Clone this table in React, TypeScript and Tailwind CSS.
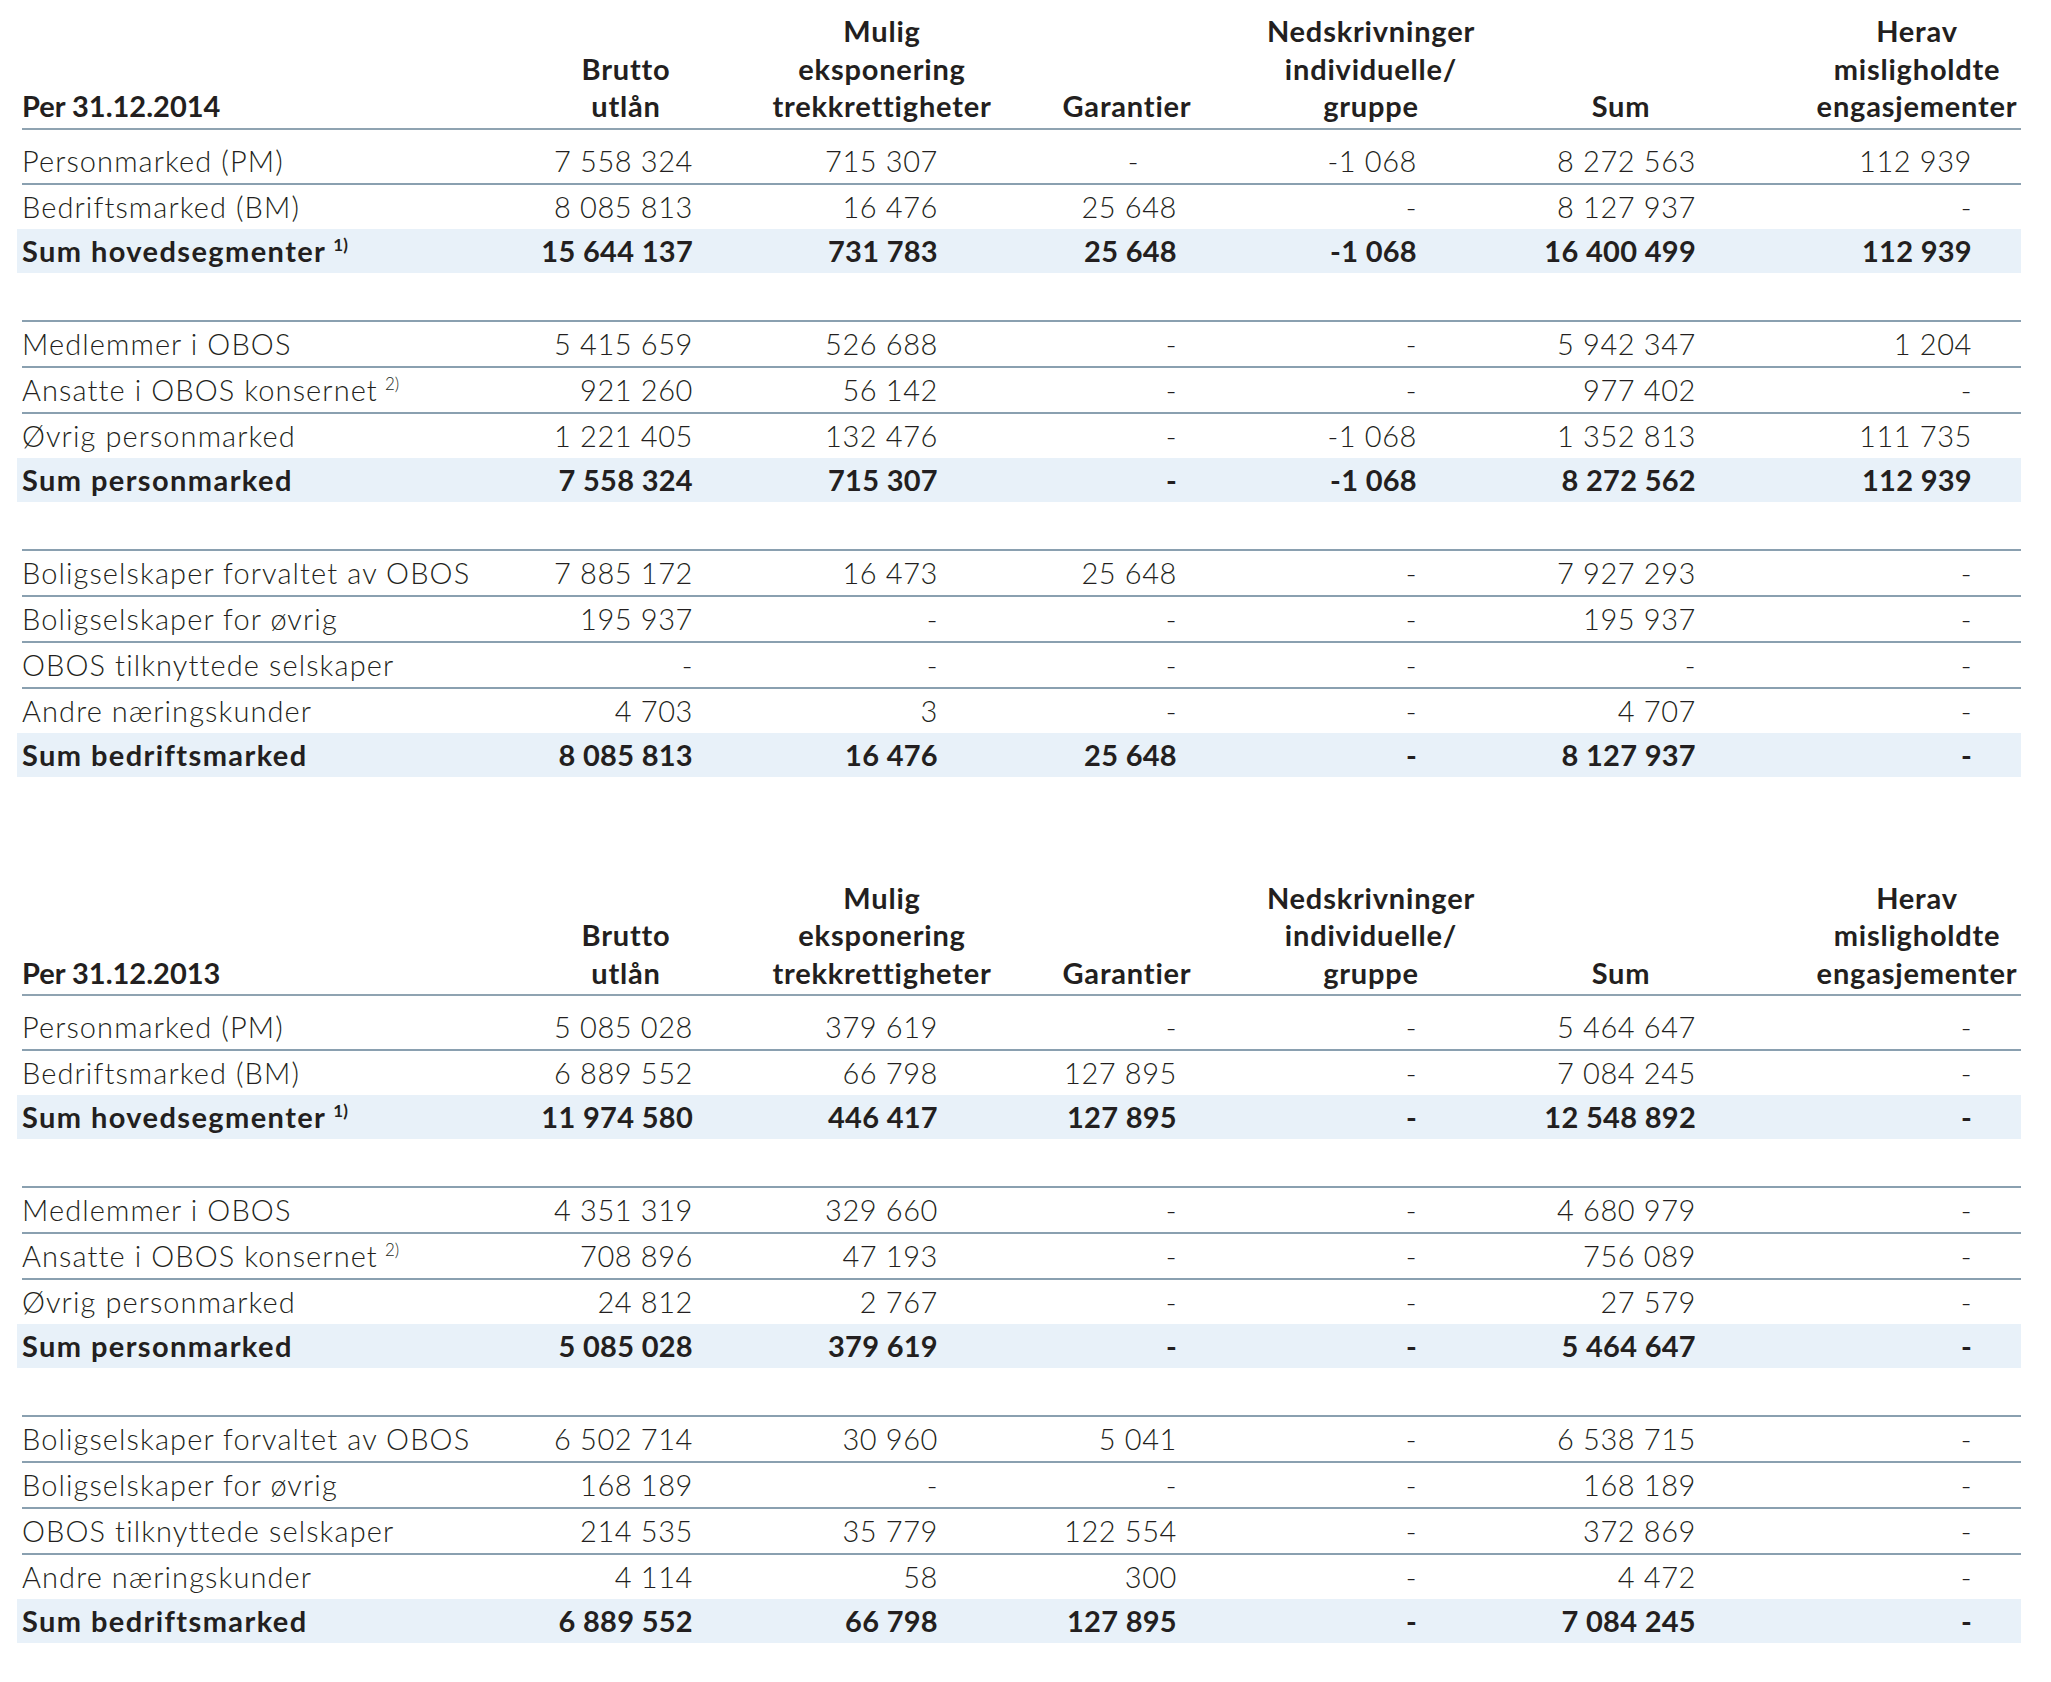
import React from "react";

type Row = { label: React.ReactNode; v: string[]; dashCenter?: boolean };

const PR = ["pr-[133px]", "pr-[139px]", "pr-[148px]", "pr-[129px]", "pr-[166px]", "pr-[49px]"];
const GRID = "grid grid-cols-[537px_267px_251px_248px_221px_316px_159px]";

const Sup = ({ n }: { n: string }) => (
  <span className="relative -top-[11px] ml-[7px] text-[17px] leading-none tracking-normal">{n}</span>
);

function Header({ title }: { title: string }) {
  const heads: string[][] = [
    ["Brutto", "utlån"],
    ["Mulig", "eksponering", "trekkrettigheter"],
    ["Garantier"],
    ["Nedskrivninger", "individuelle/", "gruppe"],
    ["Sum"],
    ["Herav", "misligholdte", "engasjementer"],
  ];
  return (
    <div className={`${GRID} border-b-2 border-[#8fa3b1] pb-[3px] font-bold leading-[37.5px]`}>
      <div className="flex items-end">
        <span className="whitespace-nowrap">{title}</span>
      </div>
      {heads.map((h, i) => (
        <div key={i} className={`flex flex-col items-center justify-end tracking-[0.8px] ${PR[i]}`}>
          {h.map((t) => (
            <span key={t} className="whitespace-nowrap">
              {t}
            </span>
          ))}
        </div>
      ))}
    </div>
  );
}

function DataRow({ row, first, sum }: { row: Row; first?: boolean; sum?: boolean }) {
  const base = sum
    ? "-ml-[5px] pl-[5px] bg-[#e8f1f9] font-bold h-[44px]"
    : first
    ? "font-light h-[53px] pt-[9px]"
    : "font-light border-t-2 border-[#8aa0b0] h-[46px]";
  return (
    <div className={`${GRID} ${base} leading-[44px]`}>
      <div className={`whitespace-nowrap ${sum ? "tracking-[1.4px]" : "tracking-[1.1px]"}`}>{row.label}</div>
      {row.v.map((x, i) => (
        <div
          key={i}
          className={`flex justify-end whitespace-nowrap ${sum ? "tracking-[0.3px]" : "tracking-[0.6px]"} ${
            row.dashCenter && i === 2 && x === "-" ? "pr-[186px]" : PR[i]
          }`}
        >
          <span>{x}</span>
        </div>
      ))}
    </div>
  );
}

function Group({ rows, sum, first }: { rows: Row[]; sum: Row; first?: boolean }) {
  return (
    <div className="flex flex-col">
      {rows.map((r, i) => (
        <DataRow key={i} row={r} first={first && i === 0} />
      ))}
      <DataRow row={sum} sum />
    </div>
  );
}

function Table({
  title,
  groups,
}: {
  title: string;
  groups: { rows: Row[]; sum: Row }[];
}) {
  return (
    <div className="flex flex-col">
      <Header title={title} />
      <Group rows={groups[0].rows} sum={groups[0].sum} first />
      <div className="h-[47px]" />
      <Group rows={groups[1].rows} sum={groups[1].sum} />
      <div className="h-[47px]" />
      <Group rows={groups[2].rows} sum={groups[2].sum} />
    </div>
  );
}

const t2014 = [
  {
    rows: [
      { label: "Personmarked (PM)", v: ["7 558 324", "715 307", "-", "-1 068", "8 272 563", "112 939"], dashCenter: true },
      { label: "Bedriftsmarked (BM)", v: ["8 085 813", "16 476", "25 648", "-", "8 127 937", "-"] },
    ],
    sum: {
      label: (
        <>
          Sum hovedsegmenter
          <Sup n="1)" />
        </>
      ),
      v: ["15 644 137", "731 783", "25 648", "-1 068", "16 400 499", "112 939"],
    },
  },
  {
    rows: [
      { label: "Medlemmer i OBOS", v: ["5 415 659", "526 688", "-", "-", "5 942 347", "1 204"] },
      {
        label: (
          <>
            Ansatte i OBOS konsernet
            <Sup n="2)" />
          </>
        ),
        v: ["921 260", "56 142", "-", "-", "977 402", "-"],
      },
      { label: "Øvrig personmarked", v: ["1 221 405", "132 476", "-", "-1 068", "1 352 813", "111 735"] },
    ],
    sum: { label: "Sum personmarked", v: ["7 558 324", "715 307", "-", "-1 068", "8 272 562", "112 939"] },
  },
  {
    rows: [
      { label: "Boligselskaper forvaltet av OBOS", v: ["7 885 172", "16 473", "25 648", "-", "7 927 293", "-"] },
      { label: "Boligselskaper for øvrig", v: ["195 937", "-", "-", "-", "195 937", "-"] },
      { label: "OBOS tilknyttede selskaper", v: ["-", "-", "-", "-", "-", "-"] },
      { label: "Andre næringskunder", v: ["4 703", "3", "-", "-", "4 707", "-"] },
    ],
    sum: { label: "Sum bedriftsmarked", v: ["8 085 813", "16 476", "25 648", "-", "8 127 937", "-"] },
  },
];

const t2013 = [
  {
    rows: [
      { label: "Personmarked (PM)", v: ["5 085 028", "379 619", "-", "-", "5 464 647", "-"] },
      { label: "Bedriftsmarked (BM)", v: ["6 889 552", "66 798", "127 895", "-", "7 084 245", "-"] },
    ],
    sum: {
      label: (
        <>
          Sum hovedsegmenter
          <Sup n="1)" />
        </>
      ),
      v: ["11 974 580", "446 417", "127 895", "-", "12 548 892", "-"],
    },
  },
  {
    rows: [
      { label: "Medlemmer i OBOS", v: ["4 351 319", "329 660", "-", "-", "4 680 979", "-"] },
      {
        label: (
          <>
            Ansatte i OBOS konsernet
            <Sup n="2)" />
          </>
        ),
        v: ["708 896", "47 193", "-", "-", "756 089", "-"],
      },
      { label: "Øvrig personmarked", v: ["24 812", "2 767", "-", "-", "27 579", "-"] },
    ],
    sum: { label: "Sum personmarked", v: ["5 085 028", "379 619", "-", "-", "5 464 647", "-"] },
  },
  {
    rows: [
      { label: "Boligselskaper forvaltet av OBOS", v: ["6 502 714", "30 960", "5 041", "-", "6 538 715", "-"] },
      { label: "Boligselskaper for øvrig", v: ["168 189", "-", "-", "-", "168 189", "-"] },
      { label: "OBOS tilknyttede selskaper", v: ["214 535", "35 779", "122 554", "-", "372 869", "-"] },
      { label: "Andre næringskunder", v: ["4 114", "58", "300", "-", "4 472", "-"] },
    ],
    sum: { label: "Sum bedriftsmarked", v: ["6 889 552", "66 798", "127 895", "-", "7 084 245", "-"] },
  },
];

export default function App() {
  return (
    <div className="min-h-[1682px] w-[2051px] bg-white pl-[22px] pt-[12px] text-[29px] text-[#231f20] [font-family:Lato,'Liberation_Sans',sans-serif]">
      <div className="w-[1999px] flex flex-col">
        <Table title="Per 31.12.2014" groups={t2014} />
        <div className="h-[102px]" />
        <Table title="Per 31.12.2013" groups={t2013} />
      </div>
    </div>
  );
}
